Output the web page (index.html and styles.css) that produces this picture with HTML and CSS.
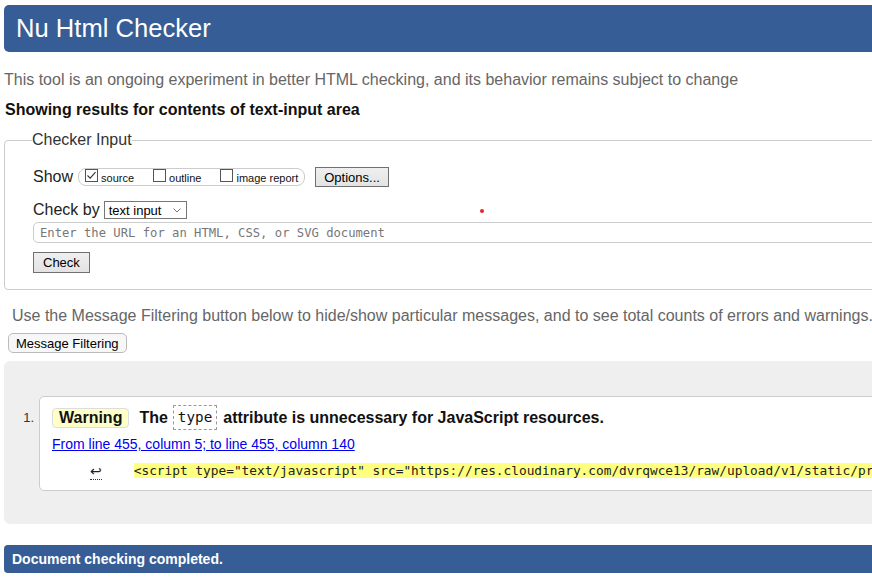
FILE: index.html
```html
<!DOCTYPE html>
<html lang="en">
<head>
<meta charset="utf-8">
<title>Nu Html Checker</title>
<link rel="stylesheet" href="styles.css">
</head>
<body>
<div class="page">
  <header class="masthead"><h1>Nu Html Checker</h1></header>
  <p class="intro">This tool is an ongoing experiment in better HTML checking, and its behavior remains subject to change</p>
  <p class="showing">Showing results for contents of text-input area</p>

  <fieldset class="checker">
    <legend>Checker Input</legend>
    <div class="row row-show">
      <span class="label-lg">Show</span>
      <span class="group">
        <span class="item"><span class="cb"><svg width="11" height="11" viewBox="0 0 11 11"><path d="M1.5 5.5 L4.2 8.2 L9.5 2.2" fill="none" stroke="#333" stroke-width="1.1"/></svg></span><span class="lbl">source</span></span>
        <span class="item"><span class="cb"></span><span class="lbl">outline</span></span>
        <span class="item"><span class="cb"></span><span class="lbl">image report</span></span>
      </span>
      <button class="btn btn-options" type="button">Options...</button>
    </div>
    <div class="row row-check">
      <span class="label-lg">Check by</span>
      <span class="select"><span>text input</span><svg width="8" height="5" viewBox="0 0 8 5"><path d="M0.5 0.5 L4 4 L7.5 0.5" fill="none" stroke="#777" stroke-width="1"/></svg></span>
    </div>
    <input class="url" type="text" placeholder="Enter the URL for an HTML, CSS, or SVG document">
    <button class="btn btn-check" type="button">Check</button>
  </fieldset>

  <p class="filter-note">Use the Message Filtering button below to hide/show particular messages, and to see total counts of errors and warnings.</p>
  <button class="btn-filter" type="button">Message Filtering</button>

  <div class="results">
    <ol class="messages">
      <li class="message">
        <span class="num">1.</span>
        <div class="msg">
          <div class="msg-title">
            <span class="badge">Warning</span>
            <span class="the">The</span>
            <code class="attr">type</code>
            <span>attribute is unnecessary for JavaScript resources.</span>
          </div>
          <div class="location"><a href="#l455">From line 455, column 5; to line 455, column 140</a></div>
          <div class="extract">
            <span class="ret">↩</span>
            <mark class="code">&lt;script type="text/javascript" src="https://res.cloudinary.com/dvrqwce13/raw/upload/v1/static/pr</mark>
          </div>
        </div>
      </li>
    </ol>
  </div>

  <div class="done">Document checking completed.</div>
</div>
<span class="dot"></span>
</body>
</html>
```
FILE: styles.css
```css
html, body {
  margin: 0;
  overflow: hidden;
  background: #fff;
}
body {
  font-family: "Liberation Sans", Arial, sans-serif;
  color: #111;
}
.page {
  width: 1300px;
  padding: 5px 0 0 4px;
}
.masthead {
  background: #365d95;
  color: #fff;
  height: 47px;
  border-radius: 5px 0 0 5px;
  padding-left: 12px;
}
.masthead h1 {
  margin: 0;
  font-weight: normal;
  font-size: 25.6px;
  line-height: 47px;
}
.intro {
  margin: 18px 0 0;
  font-size: 16px;
  line-height: 20px;
  color: #666;
}
.showing {
  margin: 10px 0 0 1px;
  font-size: 16px;
  line-height: 20px;
  font-weight: bold;
  color: #111;
}
.checker {
  margin: 10px 0 0;
  padding: 0 0 16px 28px;
  border: 1px solid #ccc;
  border-radius: 4px;
  min-width: 0;
}
.checker legend {
  padding: 0;
  margin-left: -1px;
  font-size: 16px;
  line-height: 20px;
  color: #333;
}
.row {
  display: flex;
  align-items: center;
  height: 20px;
}
.row-show {
  margin-top: 17px;
}
.row-check {
  margin-top: 13px;
}
.label-lg {
  font-size: 16px;
  color: #222;
}
.group {
  display: flex;
  align-items: baseline;
  box-sizing: border-box;
  height: 18px;
  margin-left: 5px;
  padding: 0 6px;
  border: 1px solid #ccc;
  border-radius: 8px;
  font-size: 11px;
  line-height: 13px;
  gap: 19px;
}
.item {
  display: flex;
  align-items: baseline;
  gap: 3px;
}
.cb {
  display: block;
  width: 13px;
  height: 13px;
  box-sizing: border-box;
  border: 1px solid #555;
  background: #fff;
}
.cb svg {
  display: block;
}
.lbl {
  color: #111;
}
.btn {
  box-sizing: border-box;
  font-family: "Liberation Sans", Arial, sans-serif;
  font-size: 13px;
  color: #000;
  border: 1px solid #707070;
  background: linear-gradient(#efefef, #e3e3e3);
  border-radius: 0;
  padding: 0 8px;
  margin: 0;
}
.btn-options {
  height: 20px;
  margin-left: 10px;
}
.select {
  display: flex;
  align-items: center;
  justify-content: space-between;
  box-sizing: border-box;
  width: 83px;
  height: 18px;
  margin-left: 4px;
  padding: 0 5px 0 4px;
  border: 1px solid #767676;
  font-size: 13px;
  color: #000;
}
.url {
  display: block;
  box-sizing: border-box;
  width: 100%;
  height: 21px;
  margin: 2px 0 0;
  padding: 0 6px;
  border: 1px solid #ccc;
  border-radius: 5px;
  font-family: "DejaVu Sans Mono", monospace;
  font-size: 12.2px;
  outline: none;
}
.url::placeholder {
  color: #777;
}
.btn-check {
  display: block;
  height: 21px;
  margin-top: 9px;
  padding: 0 9px;
}
.filter-note {
  margin: 16px 0 0 8px;
  font-size: 16px;
  line-height: 20px;
  color: #666;
  white-space: nowrap;
}
.btn-filter {
  display: block;
  box-sizing: border-box;
  height: 20px;
  margin: 7px 0 0 4px;
  padding: 0 7px;
  border: 1px solid #bbb;
  border-radius: 5px;
  background: #f7f7f7;
  font-family: "Liberation Sans", Arial, sans-serif;
  font-size: 13px;
  color: #000;
}
.results {
  margin-top: 8px;
  background: #efefef;
  border-radius: 6px;
  padding: 35px 0 33px 0;
}
.messages {
  margin: 0;
  padding: 0;
  list-style: none;
}
.message {
  display: flex;
}
.num {
  box-sizing: border-box;
  width: 35px;
  padding: 14px 5px 0 0;
  text-align: right;
  font-size: 13px;
  line-height: 15px;
  color: #333;
}
.msg {
  flex: 1;
  min-width: 0;
  background: #fff;
  border: 1px solid #ccc;
  border-radius: 5px;
  padding: 8px 12px 11px;
  overflow: hidden;
}
.msg-title {
  display: flex;
  align-items: center;
  height: 25px;
  font-size: 16px;
  font-weight: bold;
  color: #111;
  white-space: nowrap;
}
.badge {
  box-sizing: border-box;
  height: 20px;
  line-height: 18px;
  padding: 0 6px;
  background: #ffffc8;
  border: 1px solid #ddd;
  border-radius: 4px;
  margin-right: 10px;
}
.the {
  margin-right: 5px;
}
.attr {
  box-sizing: border-box;
  height: 25px;
  line-height: 23px;
  padding: 0 4px;
  border: 1px dashed #999;
  font-family: "DejaVu Sans Mono", monospace;
  font-size: 14.3px;
  font-weight: normal;
  margin-right: 6px;
}
.location {
  margin-top: 5px;
  font-size: 14px;
  line-height: 18px;
}
.location a {
  color: #0000ee;
  text-decoration: underline;
}
.extract {
  display: flex;
  align-items: center;
  margin-top: 8px;
  height: 18px;
  white-space: nowrap;
}
.ret {
  font-family: "DejaVu Sans", sans-serif;
  font-size: 14px;
  line-height: 15px;
  color: #222;
  margin-left: 38px;
  margin-right: 32px;
  border-bottom: 1px dotted #333;
  margin-top: 3px;
}
.code {
  background: #ffff80;
  color: #222;
  font-family: "DejaVu Sans Mono", monospace;
  font-size: 12.8px;
  line-height: 15px;
}
.done {
  margin-top: 21px;
  height: 28px;
  line-height: 28px;
  padding-left: 8px;
  background: #365d95;
  border-radius: 4px 0 0 4px;
  color: #fff;
  font-size: 14px;
  font-weight: bold;
}
.dot {
  position: absolute;
  left: 480px;
  top: 209px;
  width: 4px;
  height: 4px;
  border-radius: 50%;
  background: #e5242b;
}
```
